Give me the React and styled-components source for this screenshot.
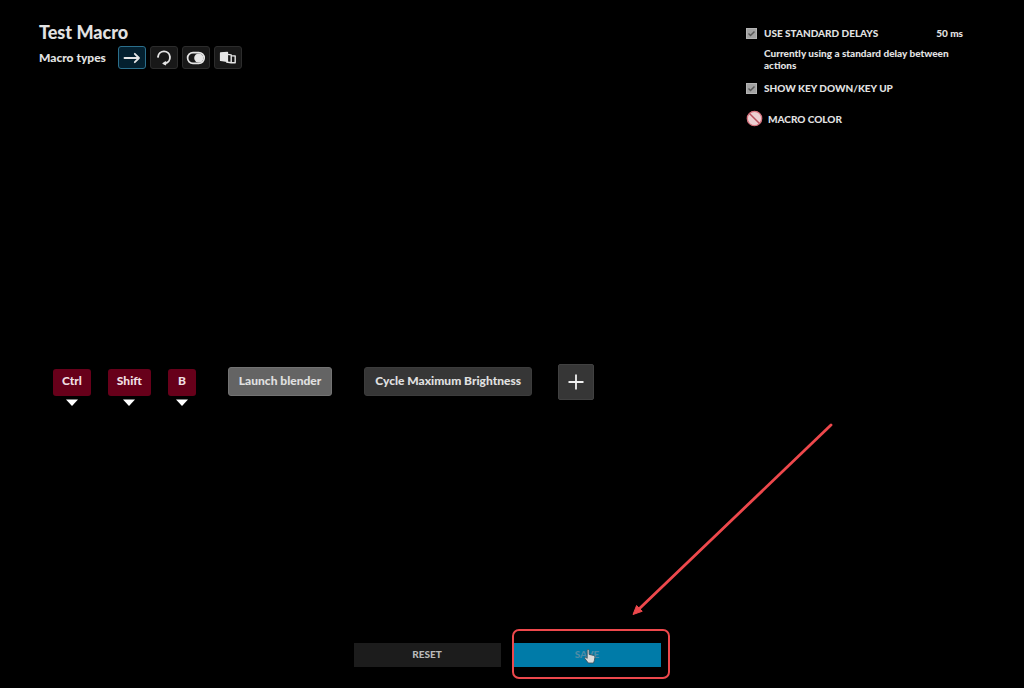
import React, { useState } from 'react';

import styled, { createGlobalStyle } from 'styled-components';

const GlobalStyle = createGlobalStyle`
    *, *::before, *::after { box-sizing: border-box; }
    body {
        margin: 0;
        background: #000;
        color: #e2e2e2;
        font-family: Lato, "Open Sans", sans-serif;
        font-weight: 900;
    }
    button, input { font: inherit; color: inherit; }
`;

const Page = styled.div`
    display: flex;
    flex-direction: column;
    min-height: 100vh;
    overflow: hidden;
`;

const Header = styled.header`
    display: flex;
    justify-content: space-between;
    padding: 20px 61px 0 39px;
`;

const Title = styled.h1`
    margin: 0;
    font-size: 18px;
    line-height: 24px;
    font-weight: 900;
`;

const TypesRow = styled.div`
    display: flex;
    align-items: center;
    gap: 12px;
    margin-top: 2px;
    font-size: 12px;
    line-height: 15px;
`;

const TypeButtons = styled.div`
    display: flex;
    gap: 4px;
`;

const TypeButton = styled.button`
    display: flex;
    align-items: center;
    justify-content: center;
    width: 28px;
    height: 23px;
    padding: 0;
    color: #e6e6e6;
    background: ${({ $active }) => ($active ? '#04202f' : '#181818')};
    border: 1px solid ${({ $active }) => ($active ? '#2b6f8c' : '#2c2c2c')};
    border-radius: 3px;
    cursor: pointer;
`;

const Options = styled.section`
    display: flex;
    flex-direction: column;
    width: 217px;
    padding-top: 5px;
    font-size: 10px;
    line-height: 16px;
`;

const OptionRow = styled.div`
    display: flex;
    justify-content: space-between;
`;

const OptionLabel = styled.label`
    display: flex;
    align-items: center;
    gap: 7px;
    cursor: pointer;
`;

const TickBox = styled.span`
    display: grid;
    width: 11px;
    height: 11px;

    > * { grid-area: 1 / 1; }
    > svg { pointer-events: none; }
`;

const Checkbox = styled.input`
    appearance: none;
    width: 11px;
    height: 11px;
    margin: 0;
    background: #a2a2a2;
    border: 1px solid #b4b4b4;
    cursor: pointer;
`;

const Hint = styled.p`
    margin: 6px 0 9px 18px;
    font-size: 10px;
    line-height: 12px;
`;

const ColorButton = styled.button`
    display: flex;
    align-items: center;
    gap: 5px;
    align-self: flex-start;
    margin-top: 14px;
    padding: 0;
    background: none;
    border: 0;
    line-height: 16px;
    cursor: pointer;
`;

const Timeline = styled.main`
    flex: 1;
    display: flex;
    align-items: center;
    padding: 0 53px 1px;
`;

const Steps = styled.div`
    display: flex;
    align-items: flex-start;
    gap: 32px;
`;

const Keys = styled.div`
    display: flex;
    gap: 17px;
    padding-top: 5px;
`;

const KeyStep = styled.div`
    display: flex;
    flex-direction: column;
    align-items: center;
    gap: 3px;
`;

const KeyCap = styled.button`
    height: 27px;
    padding: 0 9px 3px;
    font-size: 12px;
    line-height: 16px;
    color: #f0dfe2;
    background: #67001a;
    border: 0;
    border-radius: 3px;
    cursor: pointer;
`;

const WideKeyCap = styled(KeyCap)`
    padding: 0 10px 3px;
`;

const Action = styled.button`
    height: 29px;
    margin-top: 3px;
    padding: 0 10px 1px;
    font-size: 12px;
    line-height: 16px;
    color: #e0e0e0;
    background: ${({ $selected }) => ($selected ? '#646464' : '#363636')};
    border: 1px solid ${({ $selected }) => ($selected ? '#737373' : '#3c3c3c')};
    border-radius: 3px;
    cursor: pointer;
`;

const AddButton = styled.button`
    display: flex;
    align-items: center;
    justify-content: center;
    width: 36px;
    height: 36px;
    margin-left: -6px;
    padding: 0;
    color: #f0f0f0;
    background: #363636;
    border: 1px solid #414141;
    border-radius: 2px;
    cursor: pointer;
`;

const Footer = styled.footer`
    display: flex;
    justify-content: center;
    gap: 13px;
    padding: 0 10px 21px 0;
`;

const FooterButton = styled.button`
    width: 147px;
    height: 24px;
    padding: 0 0 3px;
    font-size: 10px;
    line-height: 16px;
    color: ${({ $primary }) => ($primary ? '#4f8ca6' : '#b9b9b9')};
    background: ${({ $primary }) => ($primary ? '#007ba8' : '#1c1c1c')};
    border: 0;
    cursor: pointer;
`;

const SaveSlot = styled.div`
    display: flex;
    position: relative;
`;

const Highlight = styled.div`
    position: absolute;
    inset: -14px -9px -12px -2px;
    border: 2px solid #ee484c;
    border-radius: 7px;
    pointer-events: none;
`;

const Pointer = styled.svg`
    position: absolute;
    top: 6px;
    left: 70px;
    pointer-events: none;
`;

const Arrow = styled.svg`
    position: absolute;
    left: 117px;
    bottom: 51px;
    pointer-events: none;
`;

const TYPES = [
    {
        name: 'No repeat',
        icon: (
            <svg width="18" height="14" viewBox="0 0 18 14" fill="none" stroke="currentColor" strokeWidth="1.8" strokeLinecap="round" strokeLinejoin="round">
                <path d="M1.5 7H16M11.8 2.8L16 7l-4.2 4.2" />
            </svg>
        ),
    },
    {
        name: 'Repeat while holding',
        icon: (
            <svg width="16" height="16" viewBox="0 0 16 16" fill="none" stroke="currentColor" strokeWidth="1.9" strokeLinecap="round">
                <path d="M2 6.8A6 6 0 1 1 9 13.3" />
                <path d="M9.6 11.8L7 13.5l2.6 1.3z" fill="currentColor" strokeWidth="1.2" strokeLinejoin="round" />
            </svg>
        ),
    },
    {
        name: 'Toggle',
        icon: (
            <svg width="20" height="14" viewBox="0 0 20 14" fill="none" stroke="currentColor" strokeWidth="1.7">
                <rect x="1.6" y="1.6" width="16.6" height="10.8" rx="5.4" />
                <circle cx="12.8" cy="7" r="4.6" fill="currentColor" stroke="none" />
            </svg>
        ),
    },
    {
        name: 'Sequence',
        icon: (
            <svg width="18" height="14" viewBox="0 0 18 14" fill="none" stroke="currentColor" strokeWidth="1.4" strokeLinejoin="round">
                <path d="M1.6 2l6.8-.6v9l-6.8-1z" fill="currentColor" />
                <path d="M8.6 3.4l3.6.5v7.8l-5-.7M12.4 4.6l3.8.4v6.8l-4-.1" />
            </svg>
        ),
    },
];

function Option({ id, label, checked, onChange }) {
    return (
        <OptionLabel htmlFor={id}>
            <TickBox>
                <Checkbox id={id} type="checkbox" checked={checked} onChange={onChange} />
                {checked && (
                    <svg width="11" height="11" viewBox="0 0 11 11" fill="none" stroke="#585858" strokeWidth="1.4">
                        <path d="M2.5 5.6l2 2 4-4.2" />
                    </svg>
                )}
            </TickBox>
            {label}
        </OptionLabel>
    );
}

function Key({ label, wide }) {
    const Cap = wide ? WideKeyCap : KeyCap;
    return (
        <KeyStep>
            <Cap type="button">{label}</Cap>
            <svg width="12" height="7" viewBox="0 0 12 7" fill="#fff">
                <path d="M0 0.5h12L6 7z" />
            </svg>
        </KeyStep>
    );
}

export default function App() {
    const [type, setType] = useState(0);
    const [delays, setDelays] = useState(true);
    const [keyUpDown, setKeyUpDown] = useState(true);

    return (
        <Page>
            <GlobalStyle />
            <Header>
                <div>
                    <Title>Test Macro</Title>
                    <TypesRow>
                        Macro types
                        <TypeButtons>
                            {TYPES.map(({ name, icon }, i) => (
                                <TypeButton key={name} type="button" aria-label={name} $active={i === type} onClick={() => setType(i)}>
                                    {icon}
                                </TypeButton>
                            ))}
                        </TypeButtons>
                    </TypesRow>
                </div>
                <Options>
                    <OptionRow>
                        <Option id="delays" label="USE STANDARD DELAYS" checked={delays} onChange={() => setDelays(!delays)} />
                        <span>50 ms</span>
                    </OptionRow>
                    <Hint>Currently using a standard delay between actions</Hint>
                    <Option id="updown" label="SHOW KEY DOWN/KEY UP" checked={keyUpDown} onChange={() => setKeyUpDown(!keyUpDown)} />
                    <ColorButton type="button">
                        <svg width="17" height="17" viewBox="0 0 17 17">
                            <circle cx="8.5" cy="8.5" r="7.2" fill="#ecd0d2" stroke="#d8747f" strokeWidth="1.3" />
                            <path d="M3.5 3.5l10 10" stroke="#b8505d" strokeWidth="1.5" />
                        </svg>
                        MACRO COLOR
                    </ColorButton>
                </Options>
            </Header>
            <Timeline>
                <Steps>
                    <Keys>
                        <Key label="Ctrl" />
                        <Key label="Shift" />
                        <Key label="B" wide />
                    </Keys>
                    <Action type="button" $selected>Launch blender</Action>
                    <Action type="button">Cycle Maximum Brightness</Action>
                    <AddButton type="button" aria-label="Add action">
                        <svg width="16" height="16" viewBox="0 0 16 16" stroke="currentColor" strokeWidth="1.8">
                            <path d="M8 0.5v15M0.5 8h15" />
                        </svg>
                    </AddButton>
                </Steps>
            </Timeline>
            <Footer>
                <FooterButton type="button">RESET</FooterButton>
                <SaveSlot>
                    <FooterButton type="button" $primary>SAVE</FooterButton>
                    <Highlight />
                    <Pointer width="12" height="15" viewBox="0 0 12 15">
                        <path
                            d="M3.2 1.4c0-1.2 1.9-1.2 1.9 0v4l4.4 1c1 .3 1.5.9 1.4 1.9l-.5 3-.9 2.7H4.3L.9 9.6c-.6-.9.5-1.8 1.3-1.1l1 .9z"
                            fill="#dcdcdc"
                            stroke="#3a4a52"
                            strokeWidth="0.8"
                        />
                    </Pointer>
                    <Arrow width="206" height="196" viewBox="0 0 206 196">
                        <path d="M200 5L8 189" stroke="#ee484c" strokeWidth="2.8" strokeLinecap="round" />
                        <path d="M2 194.5l3.6-9 5.6 5.8z" fill="#ee484c" stroke="#ee484c" />
                    </Arrow>
                </SaveSlot>
            </Footer>
        </Page>
    );
}
